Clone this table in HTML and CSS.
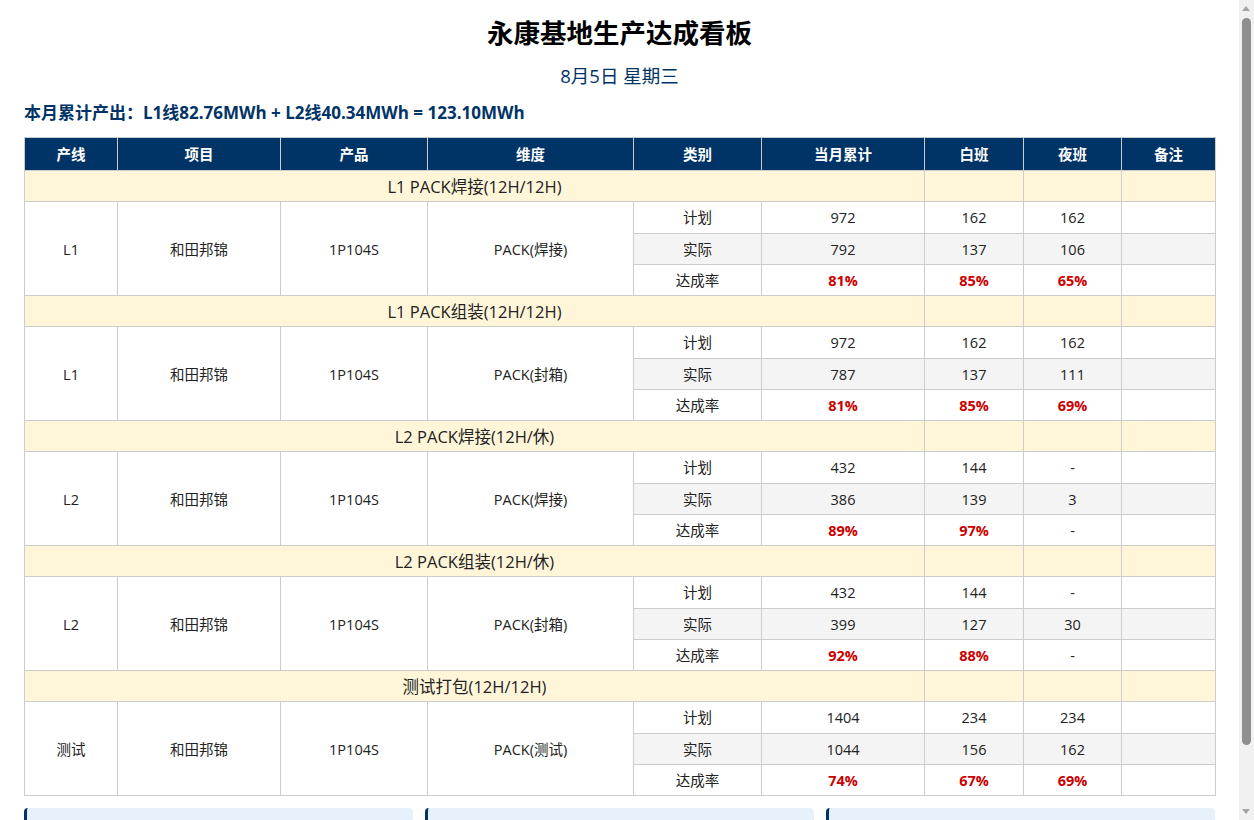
FILE: index.html
```html
<!DOCTYPE html>
<html lang="zh-CN">
<head>
<meta charset="utf-8">
<title>永康基地生产达成看板</title>
<link rel="stylesheet" href="styles.css">
</head>
<body>
<div class="page">
  <h1 class="title">永康基地生产达成看板</h1>
  <div class="date">8月5日 星期三</div>
  <div class="summary">本月累计产出：L1线82.76MWh + L2线40.34MWh = 123.10MWh</div>

  <table class="board">
    <colgroup>
      <col style="width:93px"><col style="width:163px"><col style="width:147px"><col style="width:206px"><col style="width:128px"><col style="width:163px"><col style="width:99px"><col style="width:98px"><col style="width:94px">
    </colgroup>
    <thead>
      <tr><th>产线</th><th>项目</th><th>产品</th><th>维度</th><th>类别</th><th>当月累计</th><th>白班</th><th>夜班</th><th>备注</th></tr>
    </thead>
    <tbody>
      <tr class="section"><td colspan="6">L1 PACK焊接(12H/12H)</td><td></td><td></td><td></td></tr>
      <tr><td rowspan="3">L1</td><td rowspan="3">和田邦锦</td><td rowspan="3">1P104S</td><td rowspan="3">PACK(焊接)</td><td>计划</td><td>972</td><td>162</td><td>162</td><td></td></tr>
      <tr class="actual"><td>实际</td><td>792</td><td>137</td><td>106</td><td></td></tr>
      <tr><td>达成率</td><td class="rate">81%</td><td class="rate">85%</td><td class="rate">65%</td><td></td></tr>

      <tr class="section"><td colspan="6">L1 PACK组装(12H/12H)</td><td></td><td></td><td></td></tr>
      <tr><td rowspan="3">L1</td><td rowspan="3">和田邦锦</td><td rowspan="3">1P104S</td><td rowspan="3">PACK(封箱)</td><td>计划</td><td>972</td><td>162</td><td>162</td><td></td></tr>
      <tr class="actual"><td>实际</td><td>787</td><td>137</td><td>111</td><td></td></tr>
      <tr><td>达成率</td><td class="rate">81%</td><td class="rate">85%</td><td class="rate">69%</td><td></td></tr>

      <tr class="section"><td colspan="6">L2 PACK焊接(12H/休)</td><td></td><td></td><td></td></tr>
      <tr><td rowspan="3">L2</td><td rowspan="3">和田邦锦</td><td rowspan="3">1P104S</td><td rowspan="3">PACK(焊接)</td><td>计划</td><td>432</td><td>144</td><td>-</td><td></td></tr>
      <tr class="actual"><td>实际</td><td>386</td><td>139</td><td>3</td><td></td></tr>
      <tr><td>达成率</td><td class="rate">89%</td><td class="rate">97%</td><td>-</td><td></td></tr>

      <tr class="section"><td colspan="6">L2 PACK组装(12H/休)</td><td></td><td></td><td></td></tr>
      <tr><td rowspan="3">L2</td><td rowspan="3">和田邦锦</td><td rowspan="3">1P104S</td><td rowspan="3">PACK(封箱)</td><td>计划</td><td>432</td><td>144</td><td>-</td><td></td></tr>
      <tr class="actual"><td>实际</td><td>399</td><td>127</td><td>30</td><td></td></tr>
      <tr><td>达成率</td><td class="rate">92%</td><td class="rate">88%</td><td>-</td><td></td></tr>

      <tr class="section"><td colspan="6">测试打包(12H/12H)</td><td></td><td></td><td></td></tr>
      <tr><td rowspan="3">测试</td><td rowspan="3">和田邦锦</td><td rowspan="3">1P104S</td><td rowspan="3">PACK(测试)</td><td>计划</td><td>1404</td><td>234</td><td>234</td><td></td></tr>
      <tr class="actual"><td>实际</td><td>1044</td><td>156</td><td>162</td><td></td></tr>
      <tr><td>达成率</td><td class="rate">74%</td><td class="rate">67%</td><td class="rate">69%</td><td></td></tr>
    </tbody>
  </table>

  <div class="cards">
    <div class="card"><div class="card-label">L1线本月累计</div><div class="card-value">82.76MWh</div></div>
    <div class="card"><div class="card-label">L2线本月累计</div><div class="card-value">40.34MWh</div></div>
    <div class="card"><div class="card-label">基地本月累计</div><div class="card-value">123.10MWh</div></div>
  </div>
</div>

<div class="scrollbar" aria-hidden="true">
  <div class="sb-up"></div>
  <div class="sb-thumb"></div>
  <div class="sb-down"></div>
</div>
</body>
</html>
```

FILE: styles.css
```css
html, body {
  margin: 0;
  padding: 0;
  background: #ffffff;
}

body {
  font-family: "Segoe UI", "Open Sans", "Noto Sans CJK SC", "Noto Sans", sans-serif;
  color: #222222;
}

.page {
  padding: 15px 39px 24px 24px;
}

.title {
  margin: 0;
  font-size: 26.5px;
  line-height: 36px;
  font-weight: 700;
  text-align: center;
  color: #000000;
}

.date {
  margin-top: 12px;
  font-size: 18.5px;
  line-height: 26px;
  text-align: center;
  color: #003366;
}

.summary {
  margin-top: 13px;
  font-size: 17px;
  line-height: 22px;
  font-weight: 700;
  color: #003366;
}

.board {
  margin-top: 13px;
  width: 100%;
  border-collapse: collapse;
  table-layout: fixed;
  font-size: 14.5px;
  border: 1px solid #cccccc;
}

.board th,
.board td {
  border: 1px solid #cccccc;
  text-align: center;
  vertical-align: middle;
  padding: 2px 0 0;
}

.board th {
  height: 30px;
  background: #003366;
  color: #ffffff;
  font-weight: 700;
  line-height: 18px;
}

.board td {
  height: 28.25px;
  line-height: 18px;
  color: #222222;
}

.board tr.section td {
  background: #fff6da;
  font-size: 16.5px;
}

.board tr.actual td {
  background: #f4f4f4;
}

.board td.rate {
  color: #cc0000;
  font-weight: 700;
}

.cards {
  margin-top: 12px;
  display: grid;
  grid-template-columns: repeat(3, 1fr);
  gap: 12px;
}

.card {
  background: #e6f1fc;
  border-left: 3px solid #003366;
  border-radius: 4px;
  padding: 16px 14px 8px;
  height: 40px;
}

.card-label {
  font-size: 13px;
  line-height: 18px;
  color: #555555;
}

.card-value {
  font-size: 16px;
  line-height: 22px;
  font-weight: 700;
  color: #003366;
}

/* decorative replica of the page scrollbar */
.scrollbar {
  position: fixed;
  top: 0;
  right: 0;
  width: 15px;
  height: 100%;
  background: #f1f1f1;
}

.sb-up,
.sb-down {
  position: absolute;
  left: 3px;
  width: 0;
  height: 0;
  border-left: 4.5px solid transparent;
  border-right: 4.5px solid transparent;
}

.sb-up {
  top: 6px;
  border-bottom: 5px solid #a3a3a3;
}

.sb-down {
  bottom: 6px;
  border-top: 5px solid #a3a3a3;
}

.sb-thumb {
  position: absolute;
  top: 18px;
  left: 3px;
  width: 9px;
  height: 727px;
  border-radius: 5px;
  background: #8f8f8f;
}
```
